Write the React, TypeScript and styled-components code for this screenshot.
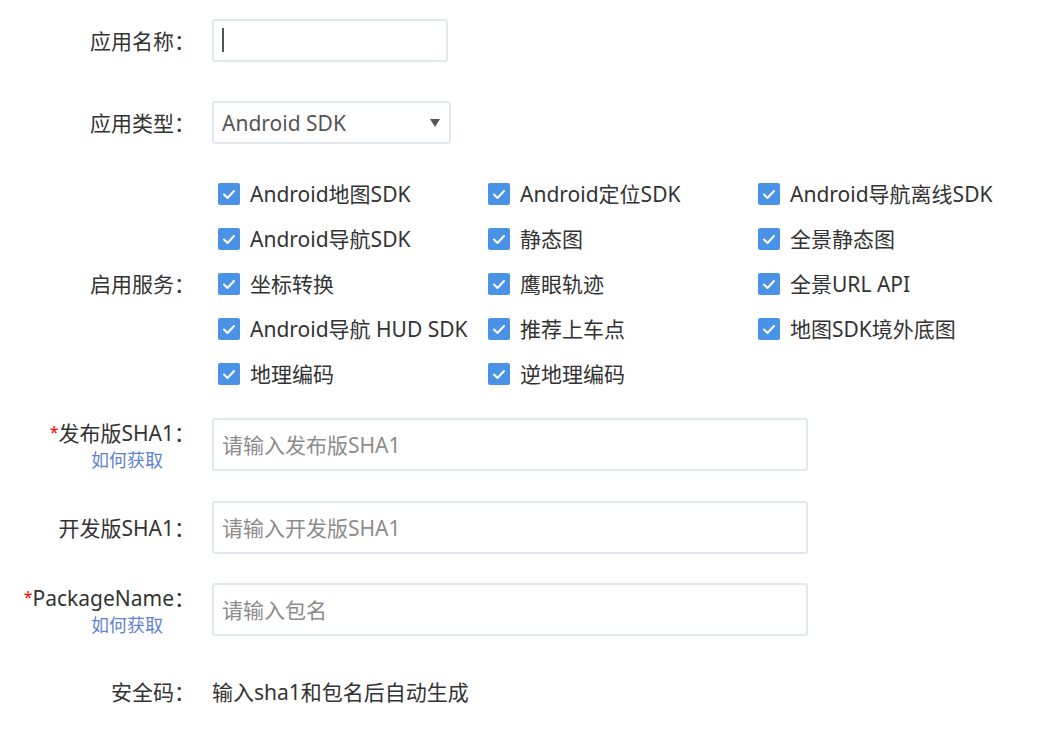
import styled, { createGlobalStyle } from 'styled-components';

const GlobalStyle = createGlobalStyle`
    body {
        margin: 0;
        background: #fff;
        font-family: "Noto Sans", "Noto Sans CJK SC", sans-serif;
        color: #333;
    }
`

const services = [
    'Android地图SDK', 'Android定位SDK', 'Android导航离线SDK',
    'Android导航SDK', '静态图', '全景静态图',
    '坐标转换', '鹰眼轨迹', '全景URL API',
    'Android导航 HUD SDK', '推荐上车点', '地图SDK境外底图',
    '地理编码', '逆地理编码',
]

const CheckIcon = () => (
    <svg width="22" height="22" viewBox="0 0 22 22">
        <polyline points="6,11.5 9.5,15 16,8" fill="none" stroke="#fff" strokeWidth="2" strokeLinecap="round" strokeLinejoin="round" />
    </svg>
)

type LabelProps = {
    text: string
    required?: boolean
    help?: boolean
}

const FieldLabel = ({ text, required, help }: LabelProps) => (
    <LabelBox>
        <LabelText>
            {required && <Star>*</Star>}
            {text}：
        </LabelText>
        {help && <HelpLink>如何获取</HelpLink>}
    </LabelBox>
)

export default function App() {
    return (
        <>
            <GlobalStyle />
            <Form>
                <Row $top={19} $align="center">
                    <FieldLabel text="应用名称" />
                    <InputWrap>
                        <TextInput $w={236} $h={43} />
                        <Caret />
                    </InputWrap>
                </Row>
                <Row $top={39} $align="center">
                    <FieldLabel text="应用类型" />
                    <SelectBox>
                        <span>Android SDK</span>
                        <svg width="10" height="8" viewBox="0 0 10 8">
                            <polygon points="0,0 10,0 5,8" fill="#555" />
                        </svg>
                    </SelectBox>
                </Row>
                <Row $top={27} $align="center">
                    <FieldLabel text="启用服务" />
                    <CheckGrid>
                        {services.map((s) => (
                            <CheckItem key={s}>
                                <CheckBox><CheckIcon /></CheckBox>
                                <span>{s}</span>
                            </CheckItem>
                        ))}
                    </CheckGrid>
                </Row>
                <Row $top={22} $align="flex-start">
                    <FieldLabel text="发布版SHA1" required help />
                    <TextInput $w={596} $h={53} placeholder="请输入发布版SHA1" />
                </Row>
                <Row $top={28} $align="center">
                    <FieldLabel text="开发版SHA1" />
                    <TextInput $w={596} $h={53} placeholder="请输入开发版SHA1" />
                </Row>
                <Row $top={29} $align="flex-start">
                    <FieldLabel text="PackageName" required help />
                    <TextInput $w={596} $h={53} placeholder="请输入包名" />
                </Row>
                <Row $top={40} $align="center">
                    <FieldLabel text="安全码" />
                    <PlainValue>输入sha1和包名后自动生成</PlainValue>
                </Row>
            </Form>
        </>
    )
}

const Form = styled.div`
    display: flex;
    flex-direction: column;
    width: 1044px;
`

const Row = styled.div<{ $top: number; $align: string }>`
    display: flex;
    align-items: ${(p) => p.$align};
    gap: 17px;
    margin-top: ${(p) => p.$top}px;
`

const LabelBox = styled.div`
    width: 195px;
    flex-shrink: 0;
    display: flex;
    flex-direction: column;
    align-items: flex-end;
`

const LabelText = styled.div`
    font-size: 21px;
    line-height: 28px;
    color: #333;
    white-space: nowrap;
`

const Star = styled.span`
    color: #f00;
    font-size: 16px;
    vertical-align: 3px;
`

const HelpLink = styled.a`
    font-size: 18px;
    line-height: 26px;
    color: #5f84d2;
    padding-right: 32px;
    cursor: pointer;
`

const InputWrap = styled.div`
    position: relative;
`

const TextInput = styled.input<{ $w: number; $h: number }>`
    box-sizing: border-box;
    width: ${(p) => p.$w}px;
    height: ${(p) => p.$h}px;
    border: 2px solid #e2e6ed;
    border-radius: 3px;
    padding: 0 8px;
    font-family: inherit;
    font-size: 21px;
    color: #333;
    outline: none;
    &::placeholder {
        color: #8c8c8c;
    }
`

const Caret = styled.span`
    position: absolute;
    left: 10px;
    top: 9px;
    width: 2px;
    height: 24px;
    background: #555;
`

const SelectBox = styled.div`
    box-sizing: border-box;
    width: 239px;
    height: 43px;
    border: 2px solid #e2e6ed;
    border-radius: 3px;
    padding: 0 9px 0 8px;
    display: flex;
    align-items: center;
    justify-content: space-between;
    font-size: 21px;
    color: #555;
`

const CheckGrid = styled.div`
    display: grid;
    grid-template-columns: repeat(3, 270px);
    grid-auto-rows: 45px;
    margin-left: 6px;
`

const CheckItem = styled.label`
    display: flex;
    align-items: center;
    gap: 10px;
    font-size: 21px;
    line-height: 26px;
    color: #333;
    white-space: nowrap;
`

const CheckBox = styled.span`
    width: 22px;
    height: 22px;
    flex-shrink: 0;
    border-radius: 2px;
    background: #4a92e6;
    display: flex;
`

const PlainValue = styled.div`
    font-size: 21px;
    line-height: 28px;
    color: #333;
`
